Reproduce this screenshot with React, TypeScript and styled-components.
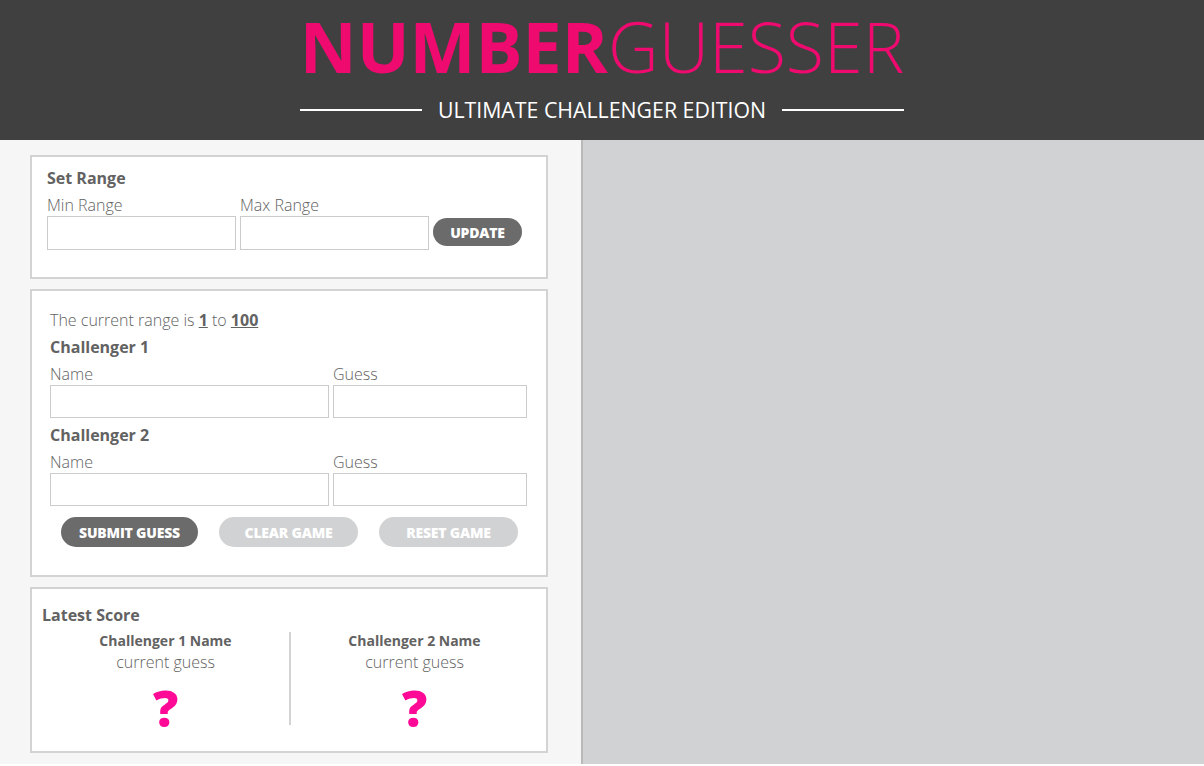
import styled, { createGlobalStyle } from 'styled-components';

const colors = {
  pink: '#ee0a6e',
  mark: '#ff0a96',
  dark: '#404040',
  text: '#626262',
  line: '#d3d3d3',
  field: '#cbcbcb',
  panel: '#f6f6f6',
  side: '#d1d2d4',
};

const GlobalStyle = createGlobalStyle`
  body {
    margin: 0;
    background: #fff;
    font-family: 'Open Sans', 'Noto Sans', sans-serif;
    color: ${colors.text};
  }
  * { box-sizing: border-box; }
`;

export default function App() {
  return (
    <>
      <GlobalStyle />
      <Header>
        <Logo>
          <strong>NUMBER</strong>
          <span>GUESSER</span>
        </Logo>
        <Tagline>
          <Rule />
          ULTIMATE CHALLENGER EDITION
          <Rule />
        </Tagline>
      </Header>
      <Main>
        <Sidebar>
          <Card $pad="11px 15px 27px">
            <Heading>Set Range</Heading>
            <RangeRow>
              <Field $w={189}>
                <Label>Min Range</Label>
                <Input />
              </Field>
              <Field $w={189}>
                <Label>Max Range</Label>
                <Input />
              </Field>
              <Button $tone="dark" $w={89} $h={28}>Update</Button>
            </RangeRow>
          </Card>

          <Card $pad="19px 19px 28px 18px">
            <Text>
              The current range is <b>1</b> to <b>100</b>
            </Text>
            {[1, 2].map((n) => (
              <Challenger key={n}>
                <Heading>Challenger {n}</Heading>
                <GuessRow>
                  <Field $w={279}>
                    <Label>Name</Label>
                    <Input $h={33} />
                  </Field>
                  <Field $w={194}>
                    <Label>Guess</Label>
                    <Input $h={33} />
                  </Field>
                </GuessRow>
              </Challenger>
            ))}
            <Actions>
              <Button $tone="dark" $w={137} $h={30}>Submit Guess</Button>
              <Button $tone="light" $w={139} $h={30}>Clear Game</Button>
              <Button $tone="light" $w={139} $h={30}>Reset Game</Button>
            </Actions>
          </Card>

          <Card $pad="16px 8px 18px 10px">
            <Heading>Latest Score</Heading>
            <Scores>
              <Score>
                <ScoreName>Challenger 1 Name</ScoreName>
                <ScoreGuess>current guess</ScoreGuess>
                <Mark>?</Mark>
              </Score>
              <Divider />
              <Score>
                <ScoreName>Challenger 2 Name</ScoreName>
                <ScoreGuess>current guess</ScoreGuess>
                <Mark>?</Mark>
              </Score>
            </Scores>
          </Card>
        </Sidebar>
        <Board />
      </Main>
    </>
  );
}

const Header = styled.header`
  height: 140px;
  background: ${colors.dark};
  display: flex;
  flex-direction: column;
  align-items: center;
  padding-top: 4px;
`;

const Logo = styled.h1`
  margin: 0;
  font-size: 70px;
  line-height: 84px;
  color: ${colors.pink};
  white-space: nowrap;

  strong {
    font-weight: 700;
  }
  span {
    font-weight: 300;
  }
`;

const Tagline = styled.div`
  margin-top: 11px;
  display: flex;
  align-items: center;
  gap: 16px;
  font-size: 21.3px;
  line-height: 22px;
  font-weight: 400;
  color: #fff;
  white-space: nowrap;
`;

const Rule = styled.i`
  display: block;
  width: 122px;
  height: 2px;
  background: #fff;
`;

const Main = styled.main`
  display: flex;
`;

const Sidebar = styled.section`
  width: 583px;
  flex-shrink: 0;
  background: ${colors.panel};
  border-right: 2px solid #b9b9b9;
  padding: 15px 0 11px 30px;
  display: flex;
  flex-direction: column;
  gap: 10px;
`;

const Board = styled.section`
  flex: 1;
  background: ${colors.side};
`;

const Card = styled.div<{ $pad: string }>`
  width: 518px;
  background: #fff;
  border: 2px solid ${colors.line};
  padding: ${(p) => p.$pad};
  display: flex;
  flex-direction: column;
`;

const Heading = styled.div`
  font-size: 16px;
  line-height: 20px;
  font-weight: 700;
`;

const Text = styled.div`
  font-size: 16px;
  line-height: 20px;
  font-weight: 300;

  b {
    font-weight: 700;
    text-decoration: underline;
  }
`;

const Label = styled.label`
  display: block;
  font-size: 16px;
  line-height: 20px;
  font-weight: 300;
  margin-bottom: 1px;
`;

const Input = styled.input<{ $h?: number }>`
  display: block;
  width: 100%;
  height: ${(p) => p.$h ?? 34}px;
  border: 1px solid ${colors.field};
  background: #fff;
  margin: 0;
`;

const Field = styled.div<{ $w: number }>`
  width: ${(p) => p.$w}px;
`;

const RangeRow = styled.div`
  margin-top: 7px;
  display: flex;
  align-items: flex-end;
  gap: 4px;

  & > button {
    margin-bottom: 4px;
  }
`;

const Challenger = styled.div`
  margin-top: 7px;
  display: flex;
  flex-direction: column;
  gap: 7px;
`;

const GuessRow = styled.div`
  display: flex;
  gap: 4px;
`;

const Actions = styled.div`
  margin: 11px 0 0 11px;
  display: flex;
  gap: 21px;
`;

const Button = styled.button<{ $tone: 'dark' | 'light'; $w: number; $h: number }>`
  width: ${(p) => p.$w}px;
  height: ${(p) => p.$h}px;
  border: none;
  border-radius: 999px;
  background: ${(p) => (p.$tone === 'dark' ? '#6b6b6b' : colors.side)};
  color: #fff;
  font-family: inherit;
  font-size: 14px;
  font-weight: 800;
  text-transform: uppercase;
  letter-spacing: -0.2px;
  padding: 0;
`;

const Scores = styled.div`
  margin-top: 7px;
  display: flex;
`;

const Score = styled.div`
  flex: 1;
  display: flex;
  flex-direction: column;
  align-items: center;
`;

const Divider = styled.div`
  width: 2px;
  height: 93px;
  background: ${colors.line};
`;

const ScoreName = styled.div`
  font-size: 14px;
  line-height: 18px;
  font-weight: 700;
`;

const ScoreGuess = styled.div`
  margin-top: 1px;
  font-size: 16px;
  line-height: 22px;
  font-weight: 300;
`;

const Mark = styled.div`
  margin-top: 10px;
  font-size: 50px;
  line-height: 50px;
  font-weight: 800;
  color: ${colors.mark};
`;
